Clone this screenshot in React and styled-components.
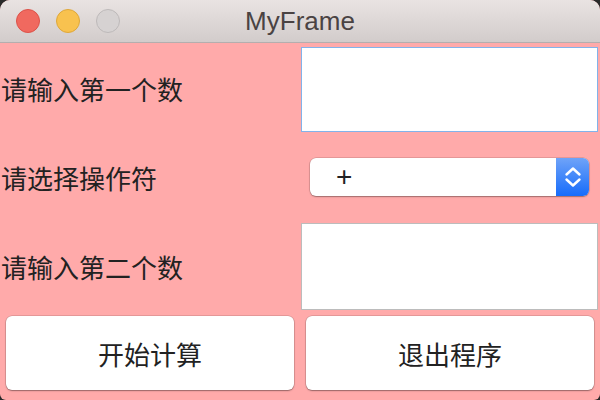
import styled, { createGlobalStyle } from "styled-components";

const Global = createGlobalStyle`
  html, body {
    margin: 0;
    padding: 0;
    background: #2a2a2a;
  }
`;

const Window = styled.div`
  width: 600px;
  height: 400px;
  border-radius: 10px 10px 6px 6px;
  overflow: hidden;
  display: flex;
  flex-direction: column;
  background: #ffaaaa;
  font-family: "Noto Sans CJK SC", "Liberation Sans", sans-serif;
`;

const TitleBar = styled.div`
  height: 42px;
  flex: none;
  display: flex;
  align-items: center;
  position: relative;
  background: linear-gradient(#e9e3e2, #d2cccb);
  border-bottom: 1px solid #b4aeae;
`;

const Lights = styled.div`
  display: flex;
  gap: 16px;
  padding-left: 16px;
`;

const Light = styled.div`
  width: 22px;
  height: 22px;
  border-radius: 50%;
  background: ${(p) => p.$color};
  border: 1px solid ${(p) => p.$edge};
`;

const Title = styled.div`
  position: absolute;
  left: 0;
  right: 0;
  text-align: center;
  font-family: "Liberation Sans", sans-serif;
  font-size: 26px;
  color: #4a4343;
  pointer-events: none;
`;

const Grid = styled.div`
  flex: 1;
  display: grid;
  grid-template-columns: 300px 300px;
  grid-template-rows: 90px 89px 89px 1fr;
`;

const Label = styled.div`
  display: flex;
  align-items: center;
  padding: 0 0 0 1px;
  font-size: 26px;
  color: #222;
`;

const Field = styled.div`
  margin: ${(p) => p.$top}px 2px 1px 1px;
  background: #fff;
  border: 1px solid ${(p) => (p.$focus ? "#82b3ea" : "#bcbcbc")};
`;

const SelectCell = styled.div`
  display: flex;
  align-items: center;
  padding: 0 11px 2px 10px;
`;

const Select = styled.div`
  flex: 1;
  height: 38px;
  display: flex;
  align-items: center;
  background: #fff;
  border-radius: 6px;
  box-shadow: 0 0 0 0.5px rgba(0, 0, 0, 0.2), 0 1px 1.5px rgba(0, 0, 0, 0.3);
  overflow: hidden;
`;

const Value = styled.div`
  flex: 1;
  padding-left: 26px;
  font-family: "Liberation Sans", sans-serif;
  font-size: 28px;
  color: #222;
`;

const Stepper = styled.div`
  width: 33px;
  height: 100%;
  display: flex;
  align-items: center;
  justify-content: center;
  background: linear-gradient(#6fa3f8, #166cfb);
`;

const ButtonCell = styled.div`
  display: flex;
  padding: 5px 6px 10px 6px;
`;

const Button = styled.div`
  flex: 1;
  display: flex;
  align-items: center;
  justify-content: center;
  background: #fff;
  border-radius: 6px;
  box-shadow: 0 0 0 0.5px rgba(0, 0, 0, 0.2), 0 1px 1.5px rgba(0, 0, 0, 0.35);
  font-size: 26px;
  color: #222;
`;

export default function App() {
  return (
    <>
      <Global />
      <Window>
        <TitleBar>
          <Lights>
            <Light $color="#f0695f" $edge="#dc5249" />
            <Light $color="#f8c24f" $edge="#dea73a" />
            <Light $color="#d6d2d2" $edge="#bdb9b9" />
          </Lights>
          <Title>MyFrame</Title>
        </TitleBar>
        <Grid>
          <Label>请输入第一个数</Label>
          <Field $focus $top={4} />
          <Label>请选择操作符</Label>
          <SelectCell>
            <Select>
              <Value>+</Value>
              <Stepper>
                <svg width="18" height="22" viewBox="0 0 18 22" fill="none" stroke="#fff" strokeWidth="2.4" strokeLinecap="round" strokeLinejoin="round">
                  <path d="M2.5 8.5 9 2.5 15.5 8.5" />
                  <path d="M2.5 13.5 9 19.5 15.5 13.5" />
                </svg>
              </Stepper>
            </Select>
          </SelectCell>
          <Label>请输入第二个数</Label>
          <Field $top={1} />
          <ButtonCell>
            <Button>开始计算</Button>
          </ButtonCell>
          <ButtonCell>
            <Button>退出程序</Button>
          </ButtonCell>
        </Grid>
      </Window>
    </>
  );
}
